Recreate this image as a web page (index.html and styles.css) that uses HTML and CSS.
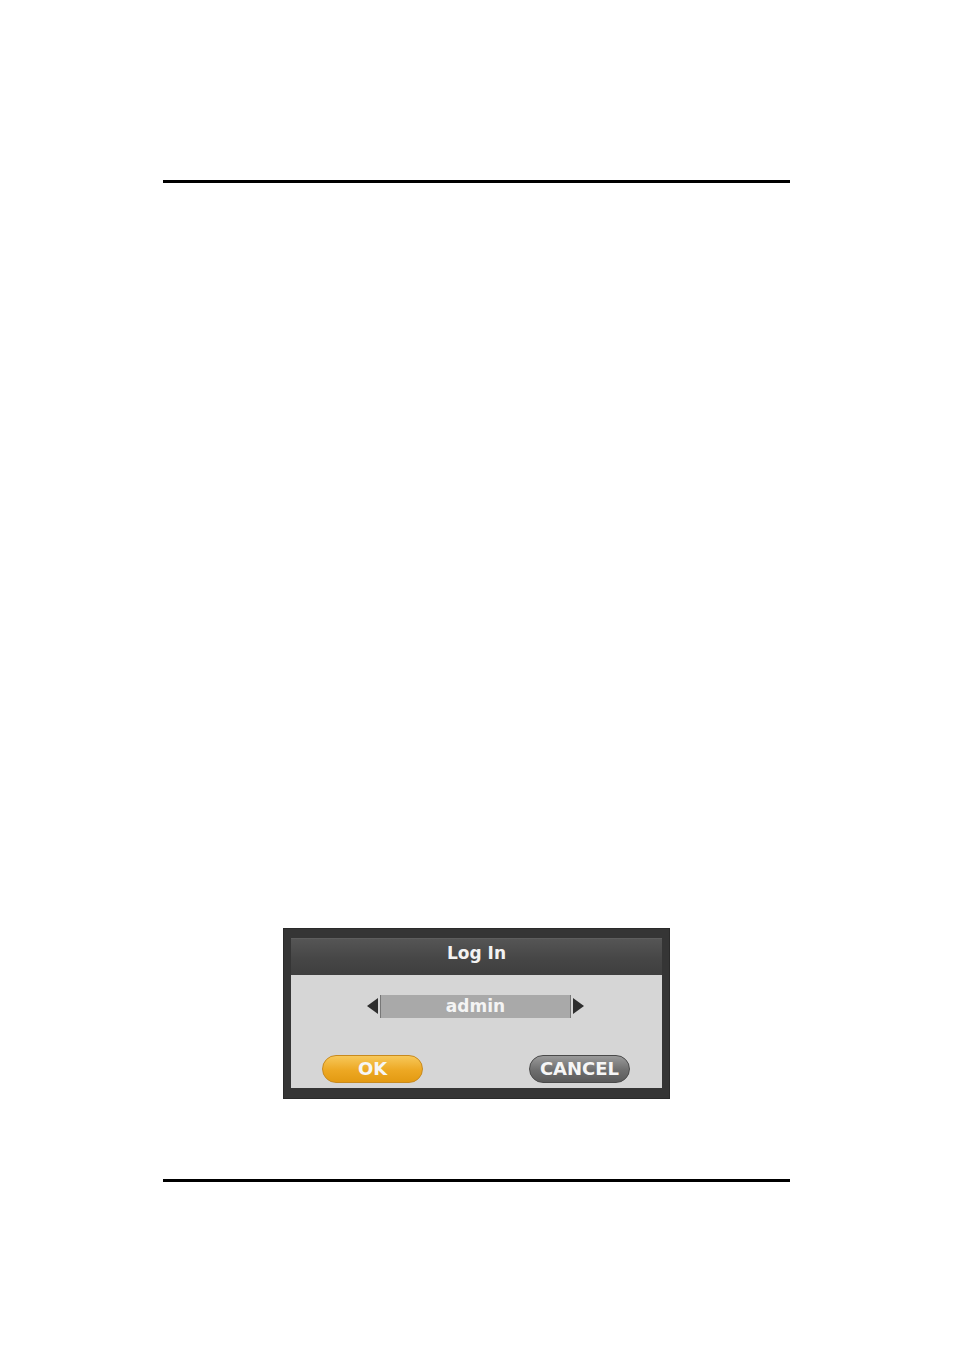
FILE: index.html
```html
<!DOCTYPE html>
<html>
<head>
<meta charset="utf-8">
<title>Log In</title>
<link rel="stylesheet" href="styles.css">
</head>
<body>
<div class="page">
  <div class="rule rule-top"></div>
  <div class="content">
    <div class="dialog">
      <div class="dialog-title">Log In</div>
      <div class="dialog-body">
        <div class="selector">
          <span class="arrow arrow-left"></span>
          <div class="selector-field">admin</div>
          <span class="arrow arrow-right"></span>
        </div>
        <div class="actions">
          <button class="btn btn-ok">OK</button>
          <button class="btn btn-cancel">CANCEL</button>
        </div>
      </div>
    </div>
  </div>
  <div class="rule rule-bottom"></div>
</div>
</body>
</html>
```
FILE: styles.css
```css
html, body {
  margin: 0;
  padding: 0;
  background: #ffffff;
}

.page {
  width: 954px;
  height: 1350px;
  padding-top: 180px;
  box-sizing: border-box;
}

.rule {
  margin-left: 163px;
  width: 627px;
  height: 3px;
  background: #000;
}

.content {
  height: 996px;
  display: flex;
  flex-direction: column;
  align-items: flex-start;
  padding-left: 283px;
  padding-top: 745px;
  box-sizing: border-box;
}

.dialog {
  width: 387px;
  height: 171px;
  box-sizing: border-box;
  background: #353535;
  border: 1px solid #2a2a2a;
  padding: 9px 7px 10px 7px;
  display: flex;
  flex-direction: column;
  font-family: "DejaVu Sans", Verdana, sans-serif;
}

.dialog-title {
  height: 37px;
  flex: none;
  background: linear-gradient(#555555, #454545 60%, #3f3f3f);
  border-top: 1px solid #5e5e5e;
  box-sizing: border-box;
  color: #f2f2f2;
  font-weight: bold;
  font-size: 17px;
  text-align: center;
  line-height: 28px;
}

.dialog-body {
  flex: 1;
  background: #d6d6d6;
  display: flex;
  flex-direction: column;
  align-items: center;
  padding-top: 19px;
}

.selector {
  display: flex;
  align-items: center;
  height: 24px;
  margin-left: -2px;
}

.selector-field {
  width: 191px;
  height: 23px;
  margin: 0 2px;
  background: #a9a9a9;
  border-left: 1px solid #777;
  border-right: 1px solid #777;
  box-sizing: border-box;
  color: #f4f4f4;
  font-weight: bold;
  font-size: 17px;
  line-height: 22px;
  text-align: center;
}

.arrow {
  width: 0;
  height: 0;
  border-top: 8px solid transparent;
  border-bottom: 8px solid transparent;
}

.arrow-left {
  border-right: 11px solid #2e2e2e;
}

.arrow-right {
  border-left: 11px solid #2e2e2e;
}

.actions {
  width: 100%;
  display: flex;
  justify-content: space-between;
  padding: 0 32px 0 31px;
  box-sizing: border-box;
  margin-top: 37px;
}

.btn {
  width: 101px;
  height: 28px;
  border-radius: 14px;
  font-family: "DejaVu Sans", Verdana, sans-serif;
  font-weight: bold;
  font-size: 18px;
  color: #f6f6f6;
  padding: 0;
  line-height: 26px;
}

.btn-ok {
  background: linear-gradient(#f7c85a, #eda823 55%, #e39a12);
  border: 1px solid #c88a1e;
}

.btn-cancel {
  background: linear-gradient(#9a9a9a, #6e6e6e 55%, #5a5a5a);
  border: 1px solid #4a4a4a;
}
```
